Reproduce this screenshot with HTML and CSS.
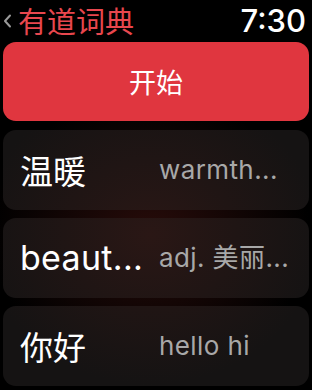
FILE: index.html
```html
<!DOCTYPE html>
<html lang="zh">
<head>
<meta charset="utf-8">
<title>有道词典</title>
<link rel="stylesheet" href="styles.css">
</head>
<body>
<header class="bar">
  <div class="back">
    <svg class="chev" width="9" height="14" viewBox="0 0 9 14"><path d="M7 1.5 L2 7 L7 12.5" fill="none" stroke="#9a9a9a" stroke-width="2" stroke-linecap="round" stroke-linejoin="round"/></svg>
    <span class="title">有道词典</span>
  </div>
  <span class="time">7:30</span>
</header>
<button class="start">开始</button>
<ul class="list">
  <li class="row"><span class="word cjk">温暖</span><span class="mean">warmth...</span></li>
  <li class="row"><span class="word latin">beaut...</span><span class="mean">adj. 美丽...</span></li>
  <li class="row"><span class="word cjk">你好</span><span class="mean">hello hi</span></li>
</ul>
</body>
</html>
```
FILE: styles.css
```css
html, body {
  margin: 0;
  padding: 0;
  background: #000;
}
body {
  width: 312px;
  height: 390px;
  overflow: hidden;
  padding: 0 3px;
  box-sizing: border-box;
  font-family: Inter, "Noto Sans CJK SC", sans-serif;
  color: #fff;
  background: radial-gradient(ellipse 160px 140px at 150px 235px, rgba(40,12,10,1), rgba(0,0,0,1));
  background-attachment: fixed;
}
.bar {
  height: 42px;
  display: flex;
  align-items: center;
  justify-content: space-between;
}
.back {
  display: flex;
  align-items: center;
  gap: 6px;
}
.chev {
  display: block;
  margin-top: -1px;
}
.title {
  font-family: "Noto Sans CJK SC", sans-serif;
  font-size: 29px;
  line-height: 1;
  color: #e8474e;
  margin-top: -1px;
}
.time {
  font-size: 31px;
  font-weight: 500;
  line-height: 1;
  margin-right: 3px;
  margin-top: -1px;
}
.start {
  display: block;
  width: 100%;
  height: 79px;
  border: 0;
  border-radius: 13px;
  background: #e0363f;
  color: #fff;
  font-family: "Noto Sans CJK SC", sans-serif;
  font-size: 27px;
  padding: 0;
}
.list {
  list-style: none;
  margin: 9px 0 0;
  padding: 0;
  display: flex;
  flex-direction: column;
  gap: 8px;
}
.row {
  height: 80px;
  border-radius: 13px;
  display: grid;
  grid-template-columns: 139px 1fr;
  align-items: center;
  padding: 0 10px 0 17px;
  background: radial-gradient(ellipse 170px 150px at 150px 235px, #2a1715, #151313 100%);
  background-attachment: fixed;
}
.word {
  font-size: 33px;
  line-height: 1;
  white-space: nowrap;
}
.latin {
  font-size: 34px;
  letter-spacing: 0.3px;
}
.cjk {
  font-family: "Noto Sans CJK SC", sans-serif;
}
.mean {
  font-size: 26px;
  color: #a8a8a8;
  letter-spacing: 0.4px;
  white-space: nowrap;
  line-height: 1;
}
```
